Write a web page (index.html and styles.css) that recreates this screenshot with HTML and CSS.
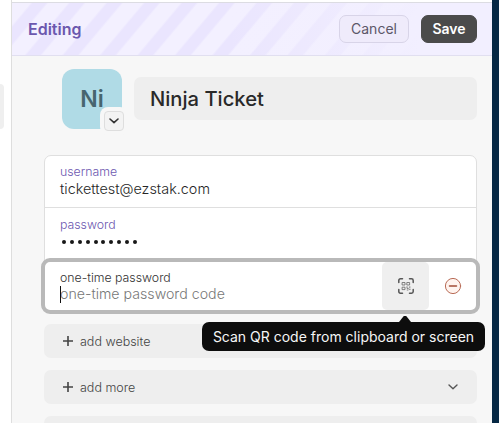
FILE: index.html
```html
<!DOCTYPE html>
<html lang="en">
<head>
<meta charset="utf-8">
<title>Editing</title>
<link rel="stylesheet" href="styles.css">
</head>
<body>
<div class="app">
  <aside class="list"><div class="list-item"></div></aside>
  <main class="panel">
    <header class="header">
      <h1 class="heading">Editing</h1>
      <button class="btn cancel">Cancel</button>
      <button class="btn save">Save</button>
    </header>
    <div class="content">
      <div class="title-row">
        <div class="avatar">Ni
          <span class="avatar-menu"><svg width="10" height="6" viewBox="0 0 10 6"><path d="M1 1l4 3.7L9 1"/></svg></span>
        </div>
        <div class="title">Ninja Ticket</div>
      </div>
      <section class="fields">
        <div class="field username"><label>username</label><div class="value">tickettest@ezstak.com</div></div>
        <div class="field password"><label>password</label>
          <div class="dots"><i></i><i></i><i></i><i></i><i></i><i></i><i></i><i></i><i></i><i></i></div>
        </div>
        <div class="field otp">
          <div class="otp-text"><label>one-time password</label><div class="placeholder">one-time password code</div></div>
          <div class="scan">
            <svg width="16" height="16" viewBox="0 0 16 16">
              <path class="frame" d="M.8 4.5V2.5Q.8.8 2.500.8h2M11.500.8h2q1.700 0 1.700 1.700v2M15.200 11.500v2q0 1.700-1.700 1.700h-2M4.500 15.200h-2Q.8 15.200.8 13.500v-2"/>
              <path class="code" d="M4.500 4.500h2.500v2.500h-2.500zM9.200 4.500h2.400v2.500h-2.400zM4.500 9.200h2.500v2.400h-2.500zM9 8.700v1.700h1.300M11.800 8.700v1M9.200 12h.8M11.200 11.300h1"/>
            </svg>
            <div class="tooltip">Scan QR code from clipboard or screen</div>
          </div>
          <svg class="remove" width="18" height="18" viewBox="0 0 18 18"><circle cx="9" cy="9" r="7.600"/><path d="M5.500 9h7"/></svg>
        </div>
      </section>
      <div class="add"><svg class="plus" width="10" height="10" viewBox="0 0 10 10"><path d="M5 0v10M0 5h10"/></svg><span>add website</span></div>
      <div class="add"><svg class="plus" width="10" height="10" viewBox="0 0 10 10"><path d="M5 0v10M0 5h10"/></svg><span>add more</span><svg class="chevron" width="10" height="6" viewBox="0 0 10 6"><path d="M1 1l4 3.700L9 1"/></svg></div>
      <div class="add"></div>
    </div>
  </main>
  <div class="desktop"></div>
</div>
</body>
</html>
```
FILE: styles.css
```css
* { box-sizing: border-box; }
body { margin: 0; overflow: hidden; font-family: Inter, "Liberation Sans", sans-serif; background: #fff; }
svg { display: block; fill: none; stroke-linecap: round; stroke-linejoin: round; }
.app { display: flex; width: 499px; height: 423px; }
.list { width: 12px; border-right: 1px solid #dedede; padding-top: 84px; }
.list-item { width: 4px; height: 45px; background: #efefef; border-radius: 0 5px 5px 0; }
.panel { width: 480px; height: 423px; overflow: hidden; background: #f7f7f7; border-top: 2px solid #fff; }
.desktop { width: 7px; background: #062844; }
.header {
  height: 54px; display: flex; align-items: center; padding: 0 15px 0 16px;
  border-top: 1px solid #dcdce2; border-bottom: 1px solid #e1dff0;
  background:
    linear-gradient(90deg, transparent 45%, #f2efff 85%),
    repeating-linear-gradient(130deg, #f3f0ff 0 14px, #eae5fe 16px 26px, #f3f0ff 28px 28.700px);
}
.heading { margin: 0 auto 0 0; font-size: 16px; line-height: 20px; font-weight: 600; color: #6b57ae; }
.btn { height: 28px; padding: 0; font: 400 14px/26px Inter, sans-serif; border-radius: 7px; border: 1px solid #d8d4e8; background: #efebfb; color: #5c5768; }
.cancel { width: 70px; margin-right: 12px; }
.save { width: 56px; background: #4b4b4b; border-color: #4b4b4b; color: #fff; font-weight: 600; }
.content { padding: 13px 15px 0 32px; }
.title-row { display: flex; align-items: center; padding-left: 18px; gap: 12px; height: 60px; }
.avatar { position: relative; width: 60px; height: 60px; border-radius: 12px; background: #b0dbe6; color: #47656f; font-size: 23px; font-weight: 600; line-height: 60px; text-align: center; }
.avatar-menu { position: absolute; left: 42px; top: 42px; width: 20px; height: 20px; border: 1px solid #dedede; border-radius: 4px; background: #f3f3f3; box-shadow: 0 0 0 4px #f7f7f7; display: grid; place-items: center; }
.avatar-menu path { stroke: #333; stroke-width: 1.600; }
.title { flex: 1; height: 43px; margin-top: -1px; border-radius: 7px; background: #eee; padding-left: 16px; font-size: 20.200px; line-height: 43px; font-weight: 500; color: #292929; }
.fields { margin-top: 26px; height: 157px; background: #fff; border: 1px solid #dfdfdf; border-radius: 7px; margin-bottom: 12px; }
.field { padding-left: 15px; }
.field label { display: block; font-size: 12.300px; font-weight: 300; line-height: 16px; color: #6d58b0; }
.username { height: 52px; padding-top: 8px; border-bottom: 1px solid #dfdfdf; }
.value { font-size: 14.400px; font-weight: 300; line-height: 18px; color: #262626; }
.password { height: 51px; padding-top: 9px; }
.dots { display: flex; gap: 3.900px; padding: 7px 0 0 2px; }
.dots i { width: 4px; height: 4px; border-radius: 50%; background: #171717; }
.otp { position: relative; display: flex; height: 56px; margin: -1px -4px 0; border: 4px solid #b9b9b9; border-radius: 9px; background: #fff; }
.otp-text { flex: 1; padding-top: 8px; }
.otp label { color: #333; }
.placeholder { position: relative; font-size: 14.200px; font-weight: 300; line-height: 16px; color: #777; }
.placeholder::before { content: ""; position: absolute; left: 0; top: 0; width: 1px; height: 17px; background: #111; }
.scan { position: relative; width: 47px; border-radius: 5px; background: #efefef; display: grid; place-items: center; }
.scan .frame { stroke: #565656; stroke-width: 1.500; }
.scan .code { stroke: #666; stroke-width: .8; }
.remove { margin: 15px 14px 0 15px; }
.remove circle { stroke: #b96c57; stroke-width: 1; fill: #fff4ef; }
.remove path { stroke: #a34c37; stroke-width: 1.500; }
.tooltip { position: absolute; right: -56px; top: 60px; width: 283px; height: 29px; border-radius: 7px; background: #0d0d0d; color: #f6f6f6; font-size: 14px; line-height: 29px; text-align: center; white-space: nowrap; z-index: 2; }
.tooltip::before { content: ""; position: absolute; left: 197px; top: -6px; width: 12px; height: 6px; background: #0d0d0d; clip-path: polygon(0 100%, 40% 0, 60% 0, 100% 100%); }
.add { height: 34px; margin-bottom: 12px; padding: 0 19px; display: flex; align-items: center; background: #eee; border-radius: 7px; color: #444; font-size: 12.500px; font-weight: 300; }
.plus { margin-right: 7px; }
.plus path { stroke: #444; stroke-width: 1.600; stroke-linecap: butt; }
.chevron { margin-left: auto; }
.chevron path { stroke: #555; stroke-width: 1.400; }
```
